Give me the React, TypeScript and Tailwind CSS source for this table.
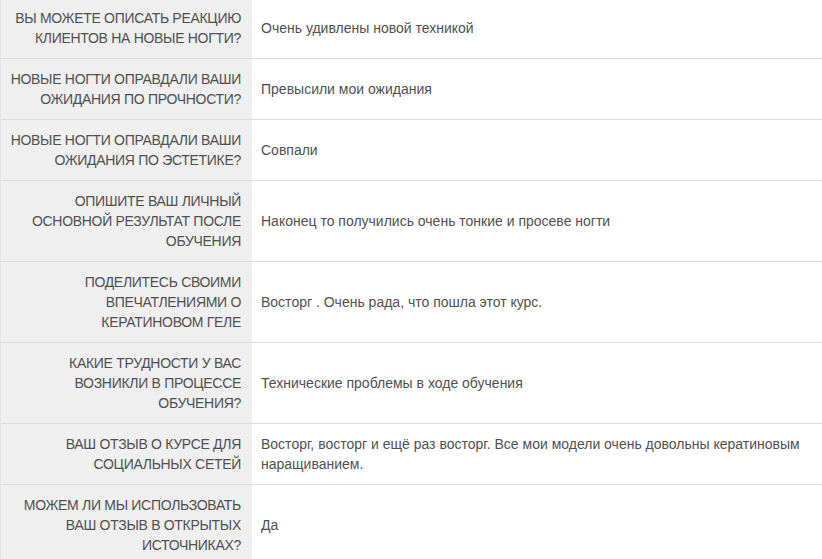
import React from 'react';

const rows: { q: string[]; a: string }[] = [
  { q: ['Вы можете описать реакцию', 'клиентов на новые ногти?'], a: 'Очень удивлены новой техникой' },
  { q: ['Новые ногти оправдали ваши', 'ожидания по прочности?'], a: 'Превысили мои ожидания' },
  { q: ['Новые ногти оправдали ваши', 'ожидания по эстетике?'], a: 'Совпали' },
  { q: ['Опишите ваш личный', 'основной результат после', 'обучения'], a: 'Наконец то получились очень тонкие и просеве ногти' },
  { q: ['Поделитесь своими', 'впечатлениями о', 'кератиновом геле'], a: 'Восторг . Очень рада, что пошла этот курс.' },
  { q: ['Какие трудности у вас', 'возникли в процессе', 'обучения?'], a: 'Технические проблемы в ходе обучения' },
  { q: ['Ваш отзыв о курсе для', 'социальных сетей'], a: 'Восторг, восторг и ещё раз восторг. Все мои модели очень довольны кератиновым наращиванием.' },
  { q: ['Можем ли мы использовать', 'ваш отзыв в открытых', 'источниках?'], a: 'Да' },
];

const App: React.FC = () => {
  return (
    <div className="w-[822px] h-[559px] overflow-hidden bg-white">
      <div
        className="-mt-[2px] border-l border-[#e2e2e2] text-[14px] leading-[20px] text-[#505050]"
        style={{ fontFamily: '"Liberation Sans", Arial, sans-serif' }}
      >
        {rows.map((r, i) => (
          <div key={i} className="flex border-b border-[#dcdcdc]">
            <div className="w-[251px] shrink-0 bg-[#efefef] py-[10px] pl-[4px] pr-[11px] text-right uppercase tracking-[-0.3px] flex flex-col justify-center items-end">
              {r.q.map((l, j) => (
                <span key={j} className="whitespace-nowrap">{l}</span>
              ))}
            </div>
            <div className="flex-1 py-[10px] pl-[9px] pr-[20px] flex items-center">
              <span>{r.a}</span>
            </div>
          </div>
        ))}
      </div>
    </div>
  );
};

export default App;
